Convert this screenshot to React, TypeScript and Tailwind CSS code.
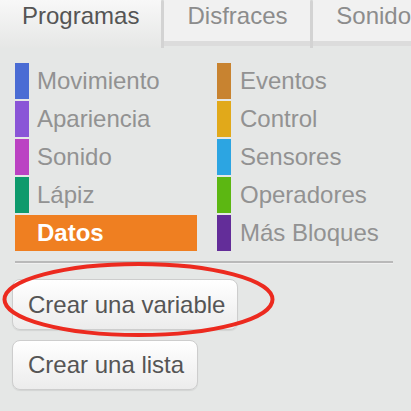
const leftCats = [
  { name: 'Movimiento', color: 'bg-[#4a6cd4]' },
  { name: 'Apariencia', color: 'bg-[#8a55d7]' },
  { name: 'Sonido', color: 'bg-[#bb42c3]' },
  { name: 'Lápiz', color: 'bg-[#0e9a6c]' },
];

const rightCats = [
  { name: 'Eventos', color: 'bg-[#c88330]' },
  { name: 'Control', color: 'bg-[#e1a91a]' },
  { name: 'Sensores', color: 'bg-[#2ca5e2]' },
  { name: 'Operadores', color: 'bg-[#5cb712]' },
  { name: 'Más Bloques', color: 'bg-[#632d99]' },
];

export default function App() {
  return (
    <div className="relative w-[411px] h-[411px] overflow-hidden bg-[#e5e7e6] font-['Liberation_Sans',Arial,sans-serif]">
      {/* Tabs */}
      <div className="flex h-[48px] items-start">
        <div className="w-[163px] h-[48px] bg-gradient-to-b from-[#f8f8f8] to-[#e6e7e6] pl-[22px] pt-[4px] text-[24px] leading-none text-[#555555]">
          Programas
        </div>
        <div className="w-[3px] h-[48px] bg-[#d3d3d3] rounded-t-full" />
        <div className="w-[149px] h-[46px] bg-[#f1f1f1] border-b-[5px] border-[#dcdcdc] pl-[24px] pt-[4px] text-[24px] leading-none text-[#8c8c8c]">
          Disfraces
        </div>
        <div className="w-[3px] h-[48px] bg-[#d3d3d3] rounded-t-full" />
        <div className="flex-1 h-[46px] bg-[#f1f1f1] border-b-[5px] border-[#dcdcdc] pl-[23px] pt-[4px] text-[24px] leading-none text-[#8c8c8c] whitespace-nowrap">
          Sonido
        </div>
      </div>

      {/* Categories */}
      <div className="flex pl-[15px] pt-[15px]">
        <div className="w-[182px] flex flex-col gap-[2px]">
          {leftCats.map((c) => (
            <div key={c.name} className="h-[36px] flex items-center">
              <div className={`w-[14px] h-[36px] ${c.color}`} />
              <span className="ml-[8px] text-[24px] leading-none text-[#929292]">{c.name}</span>
            </div>
          ))}
          <div className="h-[36px] flex items-center bg-[#ef7f21]">
            <span className="ml-[22px] text-[24px] leading-none font-bold text-white">Datos</span>
          </div>
        </div>
        <div className="ml-[20px] flex flex-col gap-[2px]">
          {rightCats.map((c) => (
            <div key={c.name} className="h-[36px] flex items-center">
              <div className={`w-[14px] h-[36px] ${c.color}`} />
              <span className="ml-[9px] text-[24px] leading-none text-[#929292] whitespace-nowrap">{c.name}</span>
            </div>
          ))}
        </div>
      </div>

      {/* Separator */}
      <div className="ml-[15px] mt-[10px] w-[378px] h-[2px] bg-[#b9b9b9] border-b border-[#f0f0f0] box-content" />

      {/* Buttons */}
      <div className="flex flex-col items-start gap-[10px] pl-[12px] pt-[15px]">
        <button className="w-[226px] h-[51px] rounded-[8px] border border-[#cdcdcd] bg-gradient-to-b from-[#ffffff] to-[#ececec] pl-[15px] text-left text-[24px] leading-none text-[#555555] shadow-[0_1px_1px_rgba(0,0,0,0.08)]">
          Crear una variable
        </button>
        <button className="w-[186px] h-[50px] rounded-[8px] border border-[#cdcdcd] bg-gradient-to-b from-[#ffffff] to-[#ececec] pl-[15px] text-left text-[24px] leading-none text-[#555555] shadow-[0_1px_1px_rgba(0,0,0,0.08)]">
          Crear una lista
        </button>
      </div>

      {/* Red highlight oval */}
      <svg className="absolute left-0 top-0 pointer-events-none" width="411" height="411">
        <ellipse cx="138.5" cy="299.5" rx="134" ry="35.5" fill="none" stroke="#ec2a1f" strokeWidth="4" />
      </svg>
    </div>
  );
}
